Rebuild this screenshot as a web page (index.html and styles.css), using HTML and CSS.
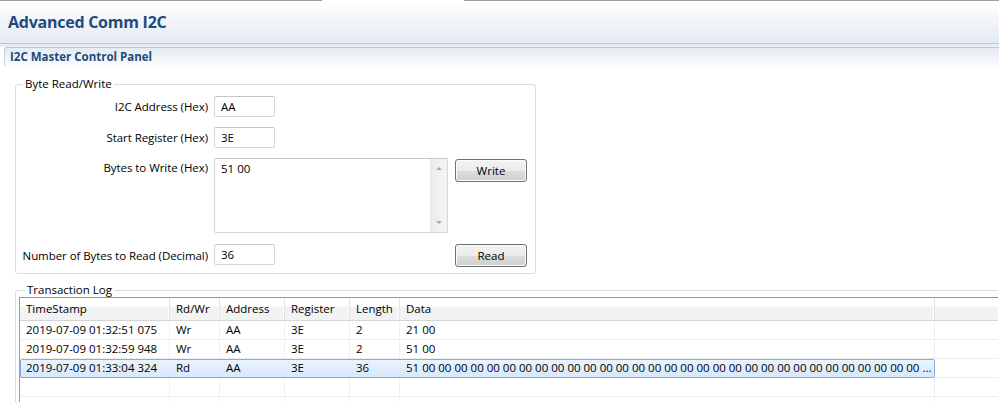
FILE: index.html
```html
<!DOCTYPE html>
<html>
<head>
<meta charset="utf-8">
<link rel="stylesheet" href="styles.css">
</head>
<body>
<div class="topbar"><div class="tb-gray tb-left"></div><div class="tb-gap"></div><div class="tb-gray tb-right"></div></div>
<div class="header"><h1 class="title">Advanced Comm I2C</h1></div>
<div class="sep"></div>
<div class="sep-gap"></div>
<div class="panel">
  <div class="panel-head">I2C Master Control Panel</div>
  <div class="panel-body">
    <fieldset class="group group-rw">
      <legend class="legend">Byte Read/Write</legend>
      <div class="form">
        <label class="lbl">I2C Address (Hex)</label>
        <div class="input">AA</div>
        <div class="empty"></div>

        <label class="lbl">Start Register (Hex)</label>
        <div class="input">3E</div>
        <div class="empty"></div>

        <label class="lbl lbl-top">Bytes to Write (Hex)</label>
        <div class="textarea">
          <div class="ta-text">51 00</div>
          <div class="scroll">
            <span class="arrow arrow-up"></span>
            <span class="arrow arrow-down"></span>
          </div>
        </div>
        <div class="btn-cell"><button class="btn">Write</button></div>

        <label class="lbl row4">Number of Bytes to Read (Decimal)</label>
        <div class="input row4">36</div>
        <div class="btn-cell row4"><button class="btn">Read</button></div>
      </div>
    </fieldset>

    <fieldset class="group group-log">
      <legend class="legend">Transaction Log</legend>
      <div class="grid">
        <div class="row head">
          <div class="c c1">TimeStamp</div>
          <div class="c c2">Rd/Wr</div>
          <div class="c c3">Address</div>
          <div class="c c4">Register</div>
          <div class="c c5">Length</div>
          <div class="c c6">Data</div>
          <div class="c cf"></div>
        </div>
        <div class="row">
          <div class="cells">
            <div class="c c1">2019-07-09 01:32:51 075</div>
            <div class="c c2">Wr</div>
            <div class="c c3">AA</div>
            <div class="c c4">3E</div>
            <div class="c c5">2</div>
            <div class="c c6">21 00</div>
          </div>
          <div class="c cf"></div>
        </div>
        <div class="row">
          <div class="cells">
            <div class="c c1">2019-07-09 01:32:59 948</div>
            <div class="c c2">Wr</div>
            <div class="c c3">AA</div>
            <div class="c c4">3E</div>
            <div class="c c5">2</div>
            <div class="c c6">51 00</div>
          </div>
          <div class="c cf"></div>
        </div>
        <div class="row">
          <div class="cells selected">
            <div class="c c1">2019-07-09 01:33:04 324</div>
            <div class="c c2">Rd</div>
            <div class="c c3">AA</div>
            <div class="c c4">3E</div>
            <div class="c c5">36</div>
            <div class="c c6">51 00 00 00 00 00 00 00 00 00 00 00 00 00 00 00 00 00 00 00 00 00 00 00 00 00 00 00 00 00 00 00 ...</div>
          </div>
          <div class="c cf"></div>
        </div>
        <div class="row">
          <div class="cells">
            <div class="c c1"></div>
            <div class="c c2"></div>
            <div class="c c3"></div>
            <div class="c c4"></div>
            <div class="c c5"></div>
            <div class="c c6"></div>
          </div>
          <div class="c cf"></div>
        </div>
        <div class="row">
          <div class="cells">
            <div class="c c1"></div>
            <div class="c c2"></div>
            <div class="c c3"></div>
            <div class="c c4"></div>
            <div class="c c5"></div>
            <div class="c c6"></div>
          </div>
          <div class="c cf"></div>
        </div>
      </div>
    </fieldset>
  </div>
</div>
</body>
</html>
```

FILE: styles.css
```css
* { box-sizing: border-box; }
html, body {
  margin: 0;
  padding: 0;
  background: #ffffff;
  width: 999px;
  height: 402px;
  overflow: hidden;
}
body {
  font-family: "Open Sans", "Noto Sans", sans-serif;
  font-size: 11.5px;
  color: #000;
}

.topbar { display: flex; height: 1px; }
.tb-gray { background: #a0a0a0; }
.tb-left { width: 322px; }
.tb-gap { width: 142px; background: #fff; }
.tb-right { flex: 1; }

.header {
  height: 42px;
  background: linear-gradient(#ffffff, #e4eaf2);
  display: flex;
  align-items: center;
  padding-left: 8px;
}
.title {
  margin: 0;
  font-size: 16px;
  font-weight: bold;
  color: #1f4a7c;
  letter-spacing: -0.25px;
}
.sep { height: 1px; background: #b6c8de; }
.sep-gap { height: 3px; background: #e6ecf3; }

.panel { margin-left: 4px; }
.panel-head {
  height: 19px;
  border-top: 1px solid #b6c8de;
  border-left: 1px solid #c3d1e2;
  border-top-left-radius: 3px;
  background: linear-gradient(#e5ebf3, #fbfcfd);
  font-weight: bold;
  font-size: 11.5px;
  color: #1f4a7c;
  padding-left: 5px;
  line-height: 18px;
}
.panel-body { padding-left: 11px; }

.group {
  margin: 0;
  border: 1px solid #d5dde6;
  border-radius: 3px;
  padding: 0;
}
.legend {
  margin-left: 6px;
  padding: 0 2px;
  line-height: 14px;
  font-size: 11.5px;
}
.group-rw {
  margin-top: 11px;
  width: 521px;
  padding: 5px 7px 6px 1px;
}
.form {
  display: grid;
  grid-template-columns: 191px 234px 73px;
  column-gap: 6px;
  row-gap: 10px;
}
.form .btn-cell { margin-left: 1px; }
.lbl {
  text-align: right;
  align-self: center;
  white-space: nowrap;
  letter-spacing: -0.06px;
}
.lbl-top { align-self: start; padding-top: 2px; }
.input {
  width: 61px;
  height: 21px;
  border: 1px solid #d2d5da;
  border-top-color: #c4c7cc;
  border-radius: 2px;
  padding-left: 6px;
  line-height: 19px;
}
.row4 { margin-top: 1px; }
.textarea {
  height: 75px;
  border: 1px solid #d2d5da;
  border-top-color: #c4c7cc;
  border-radius: 2px;
  display: flex;
}
.ta-text { flex: 1; padding: 2px 6px; }
.scroll {
  width: 17px;
  background: linear-gradient(90deg, #ececec, #f4f4f4);
  border-left: 1px solid #e8e8e8;
  display: flex;
  flex-direction: column;
  justify-content: space-between;
  align-items: center;
  padding: 8px 0 8px;
}
.arrow { width: 0; height: 0; border-left: 3px solid transparent; border-right: 3px solid transparent; }
.arrow-up { border-bottom: 3px solid #a9a9a9; }
.arrow-down { border-top: 3px solid #a9a9a9; }
.btn-cell { display: flex; align-items: center; }
.btn-cell:not(.row4) { align-items: flex-start; padding-top: 1px; }
.btn {
  width: 73px;
  height: 23px;
  border: 1px solid #707070;
  border-radius: 3px;
  background: linear-gradient(#f3f3f3 0%, #ebebeb 50%, #dddddd 51%, #cfcfcf 100%);
  box-shadow: inset 0 0 0 1px #fbfbfb;
  font-family: inherit;
  font-size: 11.5px;
  color: #000;
  padding: 0;
}

.group-log {
  margin-top: 9px;
  width: 983px;
  padding: 0 0 0 3px;
  border-right: none;
  border-top-right-radius: 0;
  border-bottom-right-radius: 0;
}
.grid {
  border-top: 1px solid #8f9296;
  border-left: 1px solid #9a9ca0;
}
.row { display: flex; height: 19px; }
.cells { display: flex; border-bottom: 1px solid #ededed; }
.c {
  height: 100%;
  padding-left: 6px;
  white-space: nowrap;
  overflow: hidden;
  line-height: 18px;
  border-right: 1px solid #f0f0f0;
}
.c1 { width: 150px; }
.c2 { width: 50px; }
.c3 { width: 65px; }
.c4 { width: 65px; }
.c5 { width: 50px; }
.c6 { width: 535px; border-right-color: #e7eef8; }
.cf { flex: 1; border-bottom: 1px solid #ededed; border-right: none; }
.head { height: 23px; }
.head .c {
  line-height: 22px;
  background: linear-gradient(#ffffff 0%, #ffffff 38%, #f2f3f5 40%, #f1f2f4 100%);
  border-bottom: 1px solid #d5d5d5;
  border-right: 1px solid #e2e3e5;
  box-shadow: inset -1px 0 0 #fdfdfd;
}
.head .cf { border-right: none; box-shadow: none; }
.selected {
  background: linear-gradient(#ebf4fd, #d6e8fc);
  outline: 1px solid #84acdd;
  outline-offset: -1px;
  border-radius: 2px;
  border-bottom-color: transparent;
}
.selected .c { border-right-color: transparent; }
```
